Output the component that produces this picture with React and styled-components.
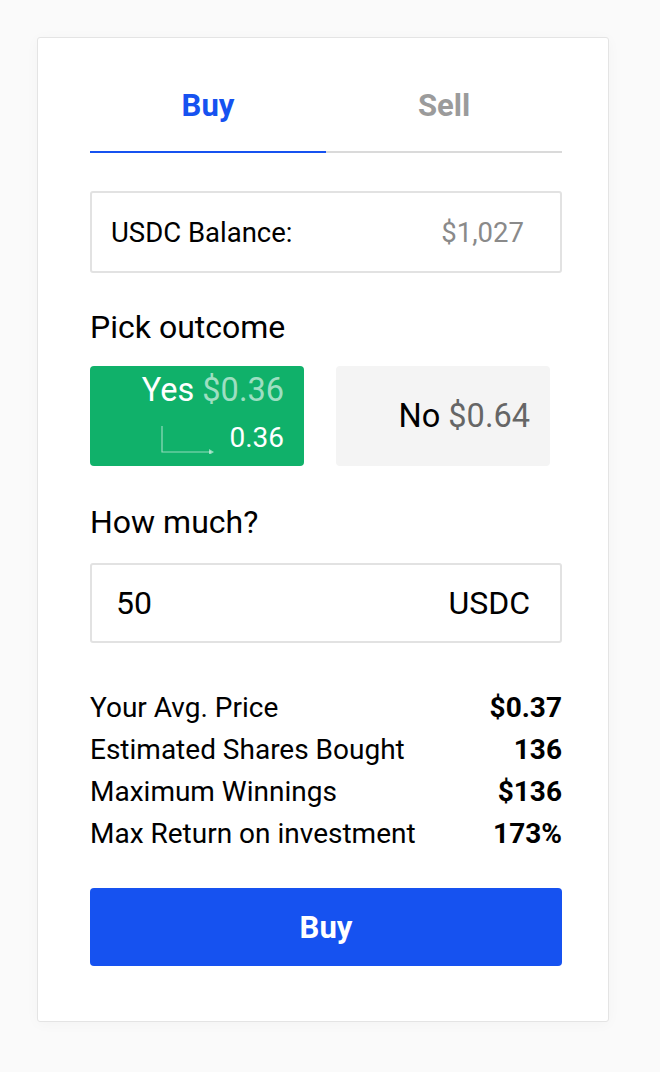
import React, { useState } from 'react'
import styled, { createGlobalStyle } from 'styled-components'

const GlobalStyle = createGlobalStyle`
  html, body {
    margin: 0;
    padding: 0;
    background: #fafafa;
    font-family: Roboto, "Liberation Sans", Arial, sans-serif;
    color: #000;
  }
  * {
    box-sizing: border-box;
  }
`

const summary = [
  { label: 'Your Avg. Price', value: '$0.37' },
  { label: 'Estimated Shares Bought', value: '136' },
  { label: 'Maximum Winnings', value: '$136' },
  { label: 'Max Return on investment', value: '173%' }
]

const Arrow = () => (
  <svg width="54" height="28" viewBox="0 0 54 28" fill="none">
    <path d="M1 0 V26 H50" stroke="rgba(255,255,255,0.55)" strokeWidth="1.2" />
    <path d="M48 23 L53 26 L48 29 Z" fill="rgba(255,255,255,0.55)" />
  </svg>
)

const App = () => {
  const [tab, setTab] = useState('buy')
  const [outcome, setOutcome] = useState('yes')

  return (
    <Page>
      <GlobalStyle />
      <Card>
        <Tabs>
          <Tab active={tab === 'buy'} onClick={() => setTab('buy')}>Buy</Tab>
          <Tab active={tab === 'sell'} onClick={() => setTab('sell')}>Sell</Tab>
        </Tabs>

        <BalanceBox>
          <span>USDC Balance:</span>
          <BalanceValue>$1,027</BalanceValue>
        </BalanceBox>

        <SectionLabel>Pick outcome</SectionLabel>
        <Outcomes>
          <YesButton selected={outcome === 'yes'} onClick={() => setOutcome('yes')}>
            <OutcomeLine>
              Yes <YesPrice>$0.36</YesPrice>
            </OutcomeLine>
            <ChangeLine>
              <Arrow />
              <span>0.36</span>
            </ChangeLine>
          </YesButton>
          <NoButton onClick={() => setOutcome('no')}>
            <OutcomeLine>
              No <NoPrice>$0.64</NoPrice>
            </OutcomeLine>
          </NoButton>
        </Outcomes>

        <SectionLabel spaced>How much?</SectionLabel>
        <AmountBox>
          <span>50</span>
          <span>USDC</span>
        </AmountBox>

        <Summary>
          {summary.map(row => (
            <SummaryRow key={row.label}>
              <span>{row.label}</span>
              <strong>{row.value}</strong>
            </SummaryRow>
          ))}
        </Summary>

        <BuyButton>Buy</BuyButton>
      </Card>
    </Page>
  )
}

const Page = styled.div`
  padding: 37px;
  min-height: 100vh;
`

const Card = styled.div`
  width: 572px;
  background: #fff;
  border: 1.5px solid #e4e4e4;
  border-radius: 3px;
  box-shadow: 0 2px 14px rgba(0, 0, 0, 0.03);
  padding: 52px 46px 55px 52px;
`

const Tabs = styled.div`
  display: grid;
  grid-template-columns: 1fr 1fr;
  border-bottom: 2px solid #dadada;
`

const Tab = styled.div`
  text-align: center;
  font-size: 31px;
  line-height: 32px;
  font-weight: 700;
  padding-bottom: 29px;
  margin-bottom: -2px;
  cursor: pointer;
  color: ${p => (p.active ? '#1652f0' : '#9b9b9b')};
  border-bottom: 2px solid ${p => (p.active ? '#1652f0' : 'transparent')};
`

const BalanceBox = styled.div`
  margin-top: 38px;
  height: 82px;
  border: 2px solid #e2e2e2;
  border-radius: 3px;
  display: flex;
  align-items: center;
  justify-content: space-between;
  padding: 0 36px 0 19px;
  font-size: 27.5px;
`

const BalanceValue = styled.span`
  color: #8a8a8a;
`

const SectionLabel = styled.div`
  margin-top: ${p => (p.spaced ? '38px' : '36px')};
  font-size: 32px;
  line-height: 36px;
`

const Outcomes = styled.div`
  margin-top: 21px;
  display: grid;
  grid-template-columns: 214px 214px;
  column-gap: 32px;
`

const OutcomeBase = styled.div`
  height: 100px;
  border-radius: 4px;
  padding: 0 20px;
  display: flex;
  flex-direction: column;
  align-items: flex-end;
  cursor: pointer;
`

const YesButton = styled(OutcomeBase)`
  background: #10b16a;
  color: #fff;
`

const NoButton = styled(OutcomeBase)`
  background: #f4f4f4;
  justify-content: center;
  color: #000;
`

const OutcomeLine = styled.div`
  font-size: 32.5px;
  line-height: 48px;
  white-space: nowrap;
`

const YesPrice = styled.span`
  color: rgba(255, 255, 255, 0.6);
`

const NoPrice = styled.span`
  color: #666;
`

const ChangeLine = styled.div`
  display: flex;
  align-items: center;
  gap: 14px;
  font-size: 28px;
  line-height: 48px;
  svg {
    margin-top: 4px;
  }
`

const AmountBox = styled.div`
  margin-top: 23px;
  height: 80px;
  border: 2px solid #e2e2e2;
  border-radius: 3px;
  display: flex;
  align-items: center;
  justify-content: space-between;
  padding: 0 30px 0 24px;
  font-size: 32px;
`

const Summary = styled.div`
  margin-top: 44px;
  display: flex;
  flex-direction: column;
`

const SummaryRow = styled.div`
  display: flex;
  justify-content: space-between;
  font-size: 28px;
  line-height: 42px;
  strong {
    font-weight: 700;
  }
`

const BuyButton = styled.button`
  display: block;
  width: 100%;
  margin-top: 33px;
  height: 78px;
  border: none;
  border-radius: 4px;
  background: #1652f0;
  color: #fff;
  font-family: inherit;
  font-size: 31px;
  font-weight: 700;
  cursor: pointer;
`

export default App
